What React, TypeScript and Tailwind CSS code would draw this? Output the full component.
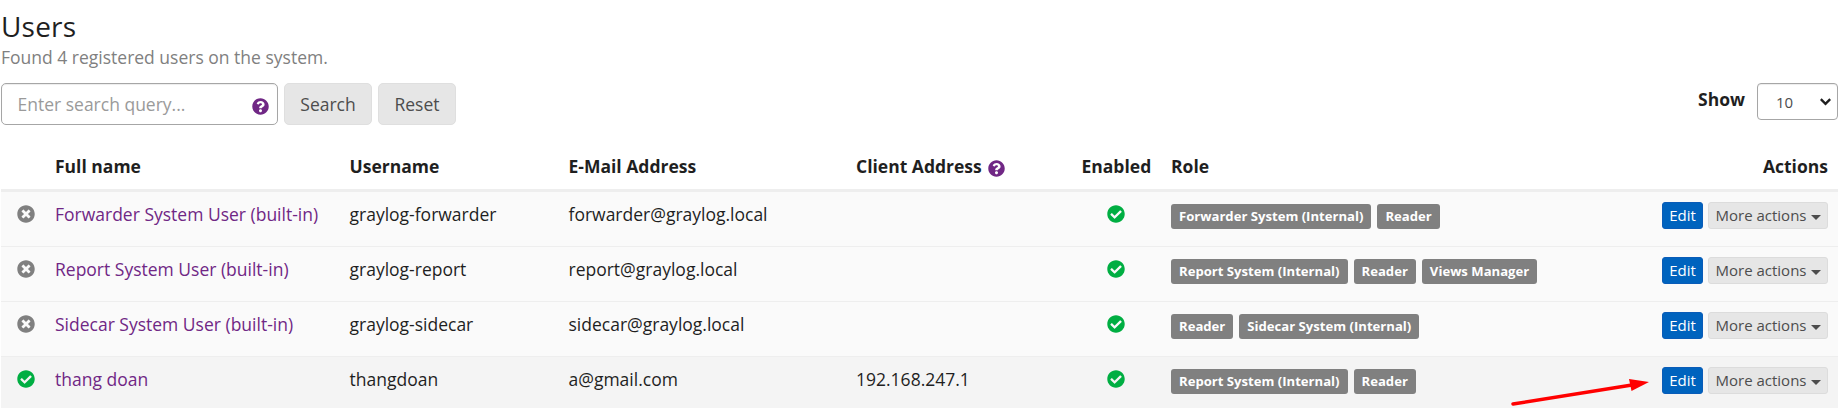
import React from "react";
import { FaCheckCircle, FaQuestionCircle, FaTimesCircle } from "react-icons/fa";

type User = {
  fullName: string;
  username: string;
  email: string;
  client?: string;
  active: boolean;
  roles: string[];
};

const users: User[] = [
  { fullName: "Forwarder System User (built-in)", username: "graylog-forwarder", email: "forwarder@graylog.local", active: false, roles: ["Forwarder System (Internal)", "Reader"] },
  { fullName: "Report System User (built-in)", username: "graylog-report", email: "report@graylog.local", active: false, roles: ["Report System (Internal)", "Reader", "Views Manager"] },
  { fullName: "Sidecar System User (built-in)", username: "graylog-sidecar", email: "sidecar@graylog.local", active: false, roles: ["Reader", "Sidecar System (Internal)"] },
  { fullName: "thang doan", username: "thangdoan", email: "a@gmail.com", client: "192.168.247.1", active: true, roles: ["Report System (Internal)", "Reader"] },
];

const columns = "grid grid-cols-[54px_294.5px_219px_287.5px_225.5px_89.5px_1fr_178px]";

function UserRow({ user }: { user: User }) {
  return (
    <div className={`${columns} h-[55px] border-b border-[#eeeeee] pt-[10px] leading-[25px] ${user.active ? "bg-[#f4f4f4]" : "bg-[#fafafa]"}`}>
      <div className="pl-4 pt-[3px]">
        {user.active ? <FaCheckCircle size={18} className="text-[#00ae42]" /> : <FaTimesCircle size={18} className="text-[#808080]" />}
      </div>
      <a className="text-[#702785]">{user.fullName}</a>
      <div>{user.username}</div>
      <div>{user.email}</div>
      <div>{user.client}</div>
      <div className="pl-[25.5px] pt-[3px]">
        <FaCheckCircle size={18} className="text-[#00ae42]" />
      </div>
      <div className="flex gap-[6px] pt-[2px]">
        {user.roles.map((role) => (
          <span key={role} className="h-[25px] rounded-[3px] bg-[#808080] px-2 text-[13.125px] font-bold leading-[24px] text-white">
            {role}
          </span>
        ))}
      </div>
      <div className="flex justify-end gap-[5px] pr-[10px] text-[15px]">
        <button className="h-[27px] w-[41px] rounded-[3px] border border-[#0a5cb8] bg-[#0063be] leading-[25px] text-white">Edit</button>
        <button className="flex h-[27px] w-[120px] items-center justify-center gap-1 rounded-[3px] border border-[#dcdcdc] bg-[#e6e6e6] leading-[25px] text-[#4d4d4d]">
          More actions
          <span className="mt-[3px] border-x-[5px] border-t-[5px] border-x-transparent border-t-[#4d4d4d]" />
        </button>
      </div>
    </div>
  );
}

export default function App() {
  return (
    <div className="relative h-[408px] w-[1840px] overflow-hidden whitespace-nowrap bg-white pl-px pr-0.5 font-['Open_Sans',sans-serif] text-[17.5px] text-[#1f1f1f]">
      <h1 className="h-[44px] pt-[10px] text-[28px] leading-[32px] tracking-[0.2px]">Users</h1>
      <p className="h-[39px] leading-[26px] text-[#808080]">Found 4 registered users on the system.</p>
      <div className="flex h-[66px] items-start">
        <div className="mr-[6px] flex h-[42px] w-[277px] items-center justify-between rounded-[5px] border border-[#a6a6a6] pl-[15.5px] pr-2 shadow-[inset_0_1px_1px_rgba(0,0,0,0.075)]">
          <span className="text-[#9a9a9a]">Enter search query...</span>
          <FaQuestionCircle size={17} className="mt-[4px] text-[#702785]" />
        </div>
        <button className="mr-[6px] h-[42px] w-[88px] rounded-[5px] border border-[#dfdfdf] bg-[#e6e6e6] text-[#4d4d4d]">Search</button>
        <button className="h-[42px] w-[78px] rounded-[5px] border border-[#dfdfdf] bg-[#e6e6e6] text-[#4d4d4d]">Reset</button>
        <label className="ml-auto mr-3 pt-[3px] font-bold leading-[26px]">Show</label>
        <div className="flex h-[37px] w-[81px] items-center justify-between rounded-[4px] border border-[#a6a6a6] pl-[18px] pr-[6px] text-[15px] text-[#4d4d4d] shadow-[inset_0_1px_1px_rgba(0,0,0,0.075)]">
          <span className="pt-0.5">10</span>
          <svg width="11" height="8" viewBox="0 0 11 8" fill="none" stroke="#1f1f1f" strokeWidth="2.4">
            <path d="M0.8 1.2 L5.5 5.9 L10.2 1.2" />
          </svg>
        </div>
      </div>
      <div className={`${columns} h-[43px] border-b-[3px] border-[#eeeeee] pt-[4px] font-bold leading-[26px]`}>
        <div />
        <div>Full name</div>
        <div>Username</div>
        <div>E-Mail Address</div>
        <div className="flex gap-[6px]">
          Client Address
          <FaQuestionCircle size={17} className="mt-[7px] text-[#702785]" />
        </div>
        <div>Enabled</div>
        <div>Role</div>
        <div className="pr-[10px] text-right">Actions</div>
      </div>
      {users.map((user) => (
        <UserRow key={user.username} user={user} />
      ))}
      <svg className="absolute left-[1508px] top-[376px]" width="144" height="32" viewBox="0 0 144 32">
        <path d="M5 28 L124 9" stroke="#ff0000" strokeWidth="3.5" strokeLinecap="round" />
        <path d="M121 3 L141 6 L123.500 15 Z" fill="#ff0000" />
      </svg>
    </div>
  );
}
